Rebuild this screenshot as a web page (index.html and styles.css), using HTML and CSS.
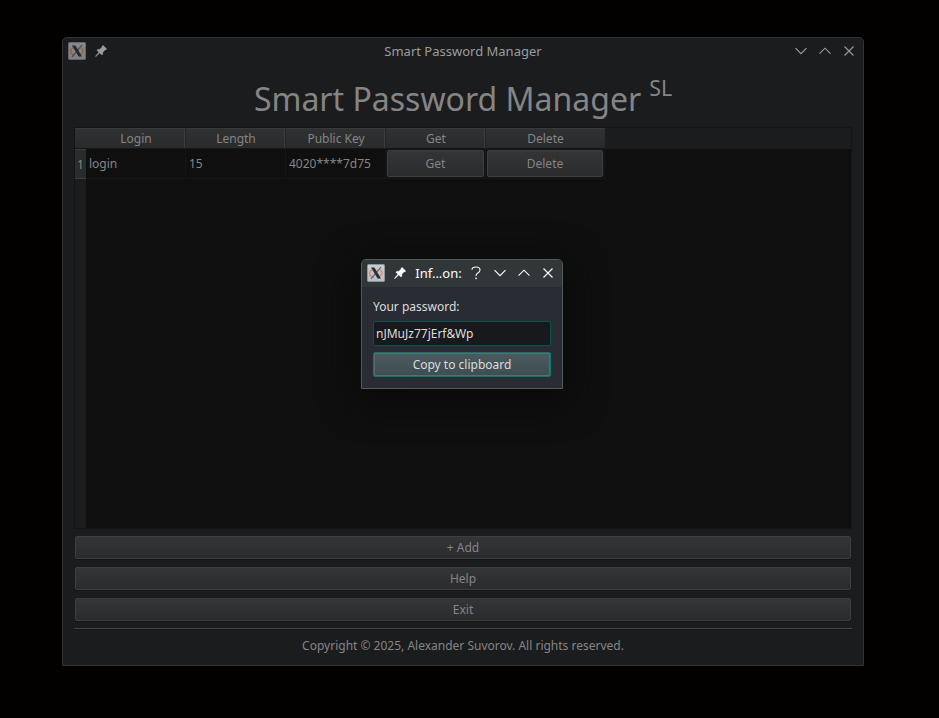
FILE: index.html
```html
<!DOCTYPE html>
<html lang="en">
<head>
<meta charset="utf-8">
<title>Smart Password Manager</title>
<link rel="stylesheet" href="styles.css">
</head>
<body>
<svg width="0" height="0" class="defs">
  <defs>
    <linearGradient id="plate" x1="0" y1="0" x2="0" y2="1"><stop offset="0" stop-color="#c9ced3"/><stop offset="1" stop-color="#b8bec3"/></linearGradient>
    <symbol id="xorg" viewBox="0 0 18 18">
      <rect x=".5" y=".5" width="17" height="17" rx="1" fill="url(#plate)" stroke="#8f969b"/>
      <path d="M5.6 5.6Q2.2 7.2 2.6 10Q3.2 12.6 6.6 13M10 13.4Q14.5 12.3 15 9Q15 7 13 6.2" fill="none" stroke="#e8865c" stroke-width="1.4"/>
      <path d="M14 3.2L4 14.8" stroke="#5f656a" stroke-width="1.2"/>
      <path d="M4 3.4H7.4L14 14.6H10.6Z" fill="#2b2f33"/>
    </symbol>
    <symbol id="pin" viewBox="0 0 12 12">
      <path d="M8 .2L11.8 4L10.8 5L10 4.9L7.9 7.2L7.9 9.2L6.9 10L4.7 8.1L.9 11.8L.3 11.3L3.8 7.2L1.9 5.2L2.8 4.2L4.8 4.2L7.1 2.1L7 1.2Z" fill="currentColor" stroke="currentColor" stroke-width=".3"/>
    </symbol>
    <symbol id="down" viewBox="0 0 12 12"><path d="M.5 3.2L6 8.7L11.5 3.2" fill="none" stroke="currentColor" stroke-width="1.1"/></symbol>
    <symbol id="up" viewBox="0 0 12 12"><path d="M.5 8.7L6 3.2L11.5 8.7" fill="none" stroke="currentColor" stroke-width="1.1"/></symbol>
    <symbol id="close" viewBox="0 0 12 12"><path d="M1.5 1.5L10.5 10.5M10.5 1.5L1.5 10.5" fill="none" stroke="currentColor" stroke-width="1.1"/></symbol>
    <symbol id="help" viewBox="0 0 12 14"><path d="M2 3.8Q2 1 6 1Q10 1 10 4Q10 6 7.8 7Q6 7.9 6 10" fill="none" stroke="currentColor" stroke-width="1.1"/><rect x="5.3" y="11.6" width="1.5" height="1.5" fill="currentColor"/></symbol>
  </defs>
</svg>
<main class="window">
  <header class="titlebar">
    <div class="left"><svg class="logo"><use href="#xorg"/></svg><svg class="pin"><use href="#pin"/></svg></div>
    <span class="caption">Smart Password Manager</span>
    <div class="right"><svg class="ico"><use href="#down"/></svg><svg class="ico"><use href="#up"/></svg><svg class="ico"><use href="#close"/></svg></div>
  </header>
  <h1><span class="name">Smart Password Manager</span><span class="sl">SL</span></h1>
  <section class="table">
    <div class="row head">
      <div class="corner"></div><div>Login</div><div>Length</div><div>Public Key</div><div>Get</div><div>Delete</div>
    </div>
    <div class="row data">
      <div class="num">1</div><div>login</div><div>15</div><div>4020****7d75</div><div class="cell"><button>Get</button></div><div class="cell"><button>Delete</button></div>
    </div>
    <div class="rest"></div>
  </section>
  <div class="actions"><button>+ Add</button><button>Help</button><button>Exit</button></div>
  <hr>
  <footer>Copyright © 2025, Alexander Suvorov. All rights reserved.</footer>
</main>
<section class="dialog">
  <header class="dialog-bar">
    <svg class="logo"><use href="#xorg"/></svg><svg class="pin"><use href="#pin"/></svg>
    <span class="caption">Inf...on:</span>
    <svg class="ico tall"><use href="#help"/></svg><svg class="ico"><use href="#down"/></svg><svg class="ico"><use href="#up"/></svg><svg class="ico"><use href="#close"/></svg>
  </header>
  <div class="dialog-body">
    <label>Your password:</label>
    <div class="field">nJMuJz77jErf&amp;Wp</div>
    <button class="copy">Copy to clipboard</button>
  </div>
</section>
</body>
</html>
```
FILE: styles.css
```css
* { box-sizing: border-box; }
body { margin: 0; width: 939px; height: 718px; overflow: hidden; background: #020100; font: 12px/16px "Noto Sans", sans-serif; color: #858585; }
.defs { position: absolute; }
svg { display: block; flex: none; }
button { font: inherit; color: inherit; padding: 0; }
.window { margin: 37px 0 0 62px; width: 802px; height: 629px; border: 1px solid #333332; border-radius: 5px 5px 0 0; background: #1b1c1e; padding: 0 11px; display: flex; flex-direction: column; }
.titlebar { height: 27px; margin: 0 -11px; padding: 0 8px 1px 5px; display: grid; grid-template-columns: 103px 1fr 100px; align-items: center; color: #9b9c9d; }
.left { display: flex; align-items: center; gap: 9px; }
.right { display: flex; justify-content: flex-end; gap: 12px; }
.logo { width: 18px; height: 18px; }
.pin, .ico { width: 12px; height: 12px; }
.titlebar .logo { opacity: .62; }
.caption { font-size: 13px; line-height: 16px; padding-bottom: 1px; text-align: center; white-space: nowrap; }
h1 { margin: 0; height: 62px; display: flex; justify-content: center; font-weight: 400; font-size: 32px; line-height: 68px; white-space: nowrap; }
.sl { font-size: 21.4px; line-height: 46px; margin-left: 8px; }
.table { height: 402px; border: 1px solid #141516; display: flex; flex-direction: column; background: #0f0f0f; }
.row { display: grid; grid-template-columns: 11px 100px 100px 100px 100px 119px; flex: none; }
.head { height: 21px; background: #1b1c1e; text-align: center; line-height: 20px; }
.head div { background: linear-gradient(#303133, #292a2c); border-top: 1px solid #38393b; border-right: 1px solid #232426; border-bottom: 1px solid #151516; box-shadow: inset -1px 0 #3b3c3e; padding-left: 1px; line-height: 19px; }
.head .corner, .head div:last-child { border-right: 0; box-shadow: none; padding: 0; }
.data { height: 30px; grid-template-rows: 30px; line-height: 29px; }
.data > div { border-right: 1px solid #161617; border-bottom: 1px solid #161617; padding-left: 3px; }
.data .num { background: linear-gradient(90deg, #2c2d2f, #292a2c); border: solid #3b3c3e; border-width: 1px 0 1px 0; padding-left: 2px; line-height: 29px; }
.data .cell { padding: 1px 1px 1px 1px; display: flex; background: #141415; }
.cell button, .actions button { flex: 1; border: 1px solid #3d3e40; border-radius: 2px; background: linear-gradient(#343537, #2a2b2d); box-shadow: 0 1px #141516; }
.cell button { line-height: 24px; height: 27px; }
.rest { flex: 1; border-left: 11px solid #1b1c1e; }
.actions { display: flex; flex-direction: column; gap: 8px; height: 85px; margin: 7px 1px 0; }
hr { width: 778px; margin: 7px 0 0; border: 0; height: 2px; background: linear-gradient(#444546 50%, #141516 50%); }
footer { text-align: center; margin-top: 7px; line-height: 17px; }
.dialog { position: absolute; left: 361px; top: 259px; width: 202px; height: 130px; border: 1px solid #555a5d; border-radius: 5px 5px 0 0; background: #292c33; color: #dcdddd; box-shadow: 0 8px 36px 4px #0a0a0a; }
.dialog-bar { height: 27px; display: flex; align-items: center; padding: 0 8px 1px 5px; gap: 12px; background: #313639; border-radius: 4px 4px 0 0; color: #fcfcfc; }
.dialog-bar .logo { margin-right: -3px; }
.dialog-bar .caption { width: 47px; margin: 0 -4px 0 -3px; }
.dialog-bar .tall { height: 14px; }
.dialog-body { padding: 12px 11px 11px; display: flex; flex-direction: column; }
.field { margin-top: 6px; height: 25px; border: 1px solid #075449; border-radius: 2px; background: #18191d; line-height: 23px; padding-left: 2px; }
.copy { margin-top: 6px; height: 25px; border: 1px solid #07796a; border-radius: 2px; background: linear-gradient(#4a5b60, #3f4d50); box-shadow: inset 0 0 0 1px #5b6c70; }
```
